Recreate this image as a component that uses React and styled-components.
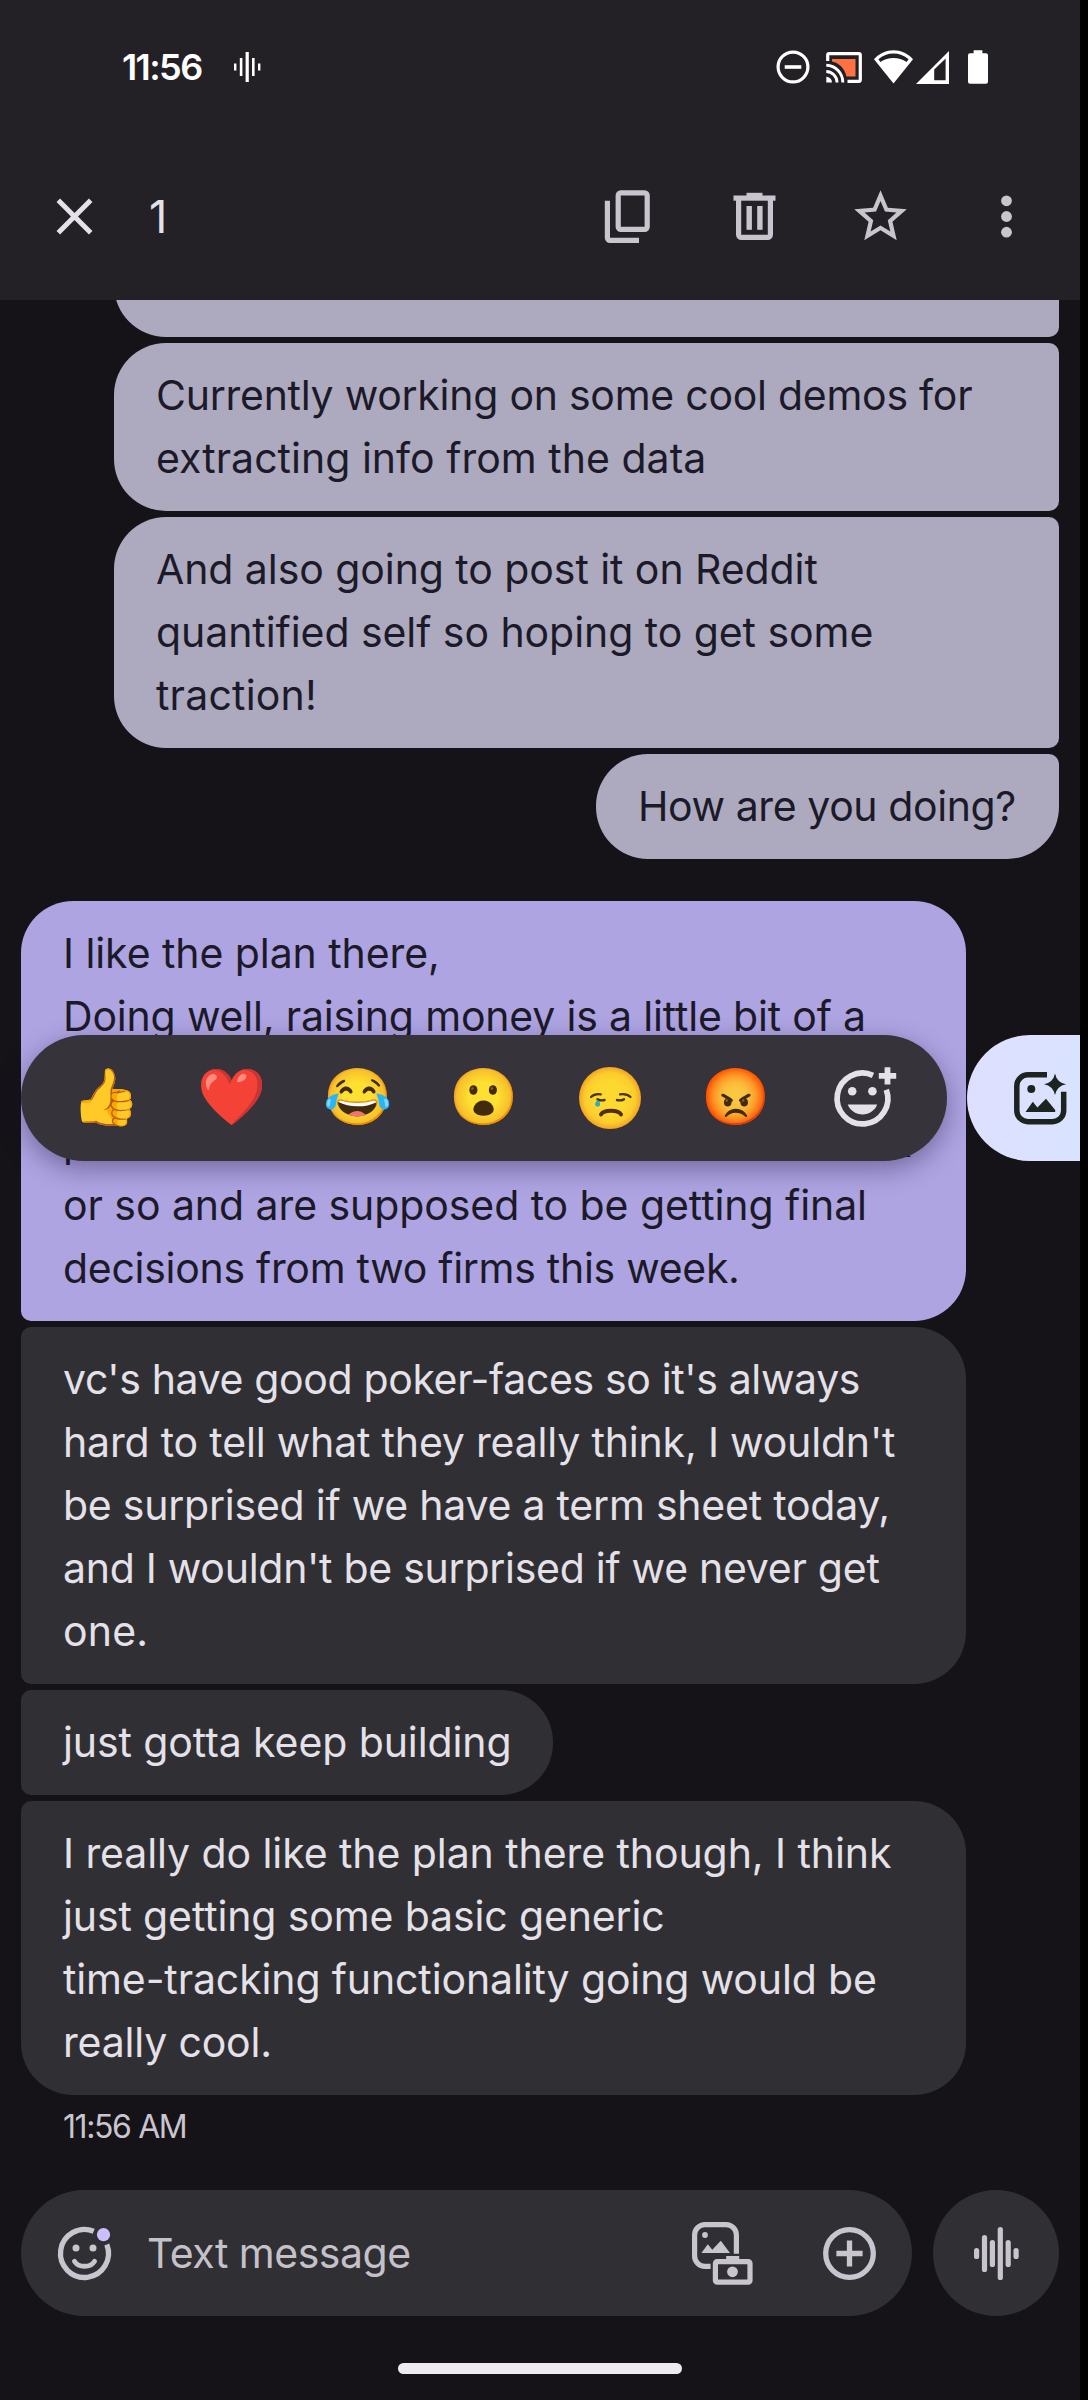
import React from 'react';
import styled, { createGlobalStyle } from 'styled-components';

const color = {
  screen: '#151318',
  header: '#232126',
  surface: '#302f34',
  popup: '#36333a',
  sent: '#adaabf',
  selected: '#aea4e2',
  onDark: '#e4e1e8',
  onLight: '#1c1a28',
  muted: '#c9c5ce',
};

const Global = createGlobalStyle`
  html, body { margin: 0; padding: 0; background: #000; }
  * { box-sizing: border-box; }
`;

const Screen = styled.div`
  width: 1080px;
  height: 2400px;
  overflow: hidden;
  display: flex;
  flex-direction: column;
  background: ${color.screen};
  font-family: Inter, Roboto, sans-serif;
  color: ${color.onDark};
`;

const Header = styled.header`
  flex: none;
  height: 300px;
  background: ${color.header};
`;

const StatusBar = styled.div`
  height: 134px;
  padding: 0 92px 0 122px;
  display: flex;
  align-items: center;
  color: #fff;
`;

const Clock = styled.span`
  width: 81px;
  font-size: 36px;
  font-weight: 600;
  line-height: 44px;
  letter-spacing: -1.6px;
  white-space: nowrap;
`;

const StatusIcons = styled.div`
  margin-left: auto;
  display: flex;
  align-items: center;
`;

const Icon = styled.svg`
  display: block;
  flex: none;
  overflow: visible;
  margin-left: ${(p) => p.$ml || 0}px;
`;

const Toolbar = styled.div`
  height: 166px;
  padding: 0 42px 1px 43px;
  display: flex;
  align-items: center;
`;

const Count = styled.span`
  margin-left: 43px;
  font-size: 45px;
  line-height: 63px;
`;

const Actions = styled.div`
  margin-left: auto;
  display: flex;
  gap: 63px;
  color: ${color.muted};
`;

const Messages = styled.main`
  flex: none;
  height: 1890px;
  padding: 0 21px;
  overflow: hidden;
  display: flex;
  flex-direction: column;
  gap: 6px;
`;

const variants = {
  sent: { bg: color.sent, fg: color.onLight, side: 'flex-end' },
  selected: { bg: color.selected, fg: color.onLight, side: 'flex-start' },
  received: { bg: color.surface, fg: color.onDark, side: 'flex-start' },
};

const Bubble = styled.div`
  position: relative;
  flex: none;
  align-self: ${(p) => variants[p.$kind].side};
  width: ${(p) => p.$width || 945}px;
  margin-top: ${(p) => p.$mt || 0}px;
  padding: 21px 0 21px 42px;
  border-radius: ${(p) => p.$corners.map((c) => (c ? '52px' : '10px')).join(' ')};
  background: ${(p) => variants[p.$kind].bg};
  color: ${(p) => variants[p.$kind].fg};
  font-size: 41px;
  line-height: 63px;
`;

const ClippedBubble = styled(Bubble)`
  height: 105px;
`;

const Line = styled.div`
  height: 63px;
  white-space: nowrap;
  letter-spacing: ${(p) => p.$track}px;
`;

const Timestamp = styled.time`
  margin: 2px 0 0 42px;
  font-size: 32px;
  line-height: 48px;
  letter-spacing: -1.4px;
  color: ${color.muted};
`;

const Popup = styled.div`
  position: absolute;
  z-index: 2;
  top: 134px;
  left: 0;
  display: flex;
  gap: 20px;
`;

const Reactions = styled.div`
  width: 926px;
  height: 126px;
  padding-left: 22px;
  border-radius: 63px;
  background: ${color.popup};
  box-shadow: 0 8px 26px rgba(20, 10, 50, 0.38);
  display: flex;
  align-items: center;
  color: ${color.onDark};
`;

const Reaction = styled.span`
  width: 126px;
  height: 126px;
  display: flex;
  align-items: center;
  justify-content: center;
  font-family: 'Noto Color Emoji', Inter, sans-serif;
  font-size: 55.5px;
  line-height: 66px;
`;

const Remix = styled.div`
  width: 200px;
  height: 126px;
  padding: 31px 0 0 42px;
  border-radius: 63px;
  background: linear-gradient(100deg, #dfdfff 0%, #d8e3ff 60%);
  color: #1d2420;
`;

const Composer = styled.footer`
  height: 126px;
  padding: 0 21px;
  display: flex;
  gap: 21px;
`;

const Field = styled.div`
  width: 891px;
  height: 126px;
  padding: 0 31px 0 32px;
  border-radius: 63px;
  background: ${color.surface};
  color: ${color.muted};
  display: flex;
  align-items: center;
`;

const Placeholder = styled.span`
  flex: 1;
  margin-left: 31px;
  font-size: 41px;
  line-height: 63px;
  letter-spacing: -0.5px;
  color: #c4c1c9;
`;

const FieldActions = styled.div`
  display: flex;
  gap: 63px;
`;

const VoiceButton = styled.div`
  width: 126px;
  height: 126px;
  border-radius: 50%;
  background: ${color.surface};
  color: ${color.muted};
  display: flex;
  align-items: center;
  justify-content: center;
`;

const Handle = styled.div`
  width: 284px;
  height: 11px;
  margin: 47px auto 0;
  border-radius: 6px;
  background: #ecebed;
`;

const Wave = () => (
  <Icon width="27" height="30" viewBox="0 0 27 30" fill="currentColor" $ml={31}>
    <rect x="0" y="11.5" width="2.4" height="7" />
    <rect x="5.8" y="6" width="2.6" height="18" />
    <rect x="11.6" y="0" width="3.2" height="30" />
    <rect x="18" y="6" width="2.6" height="18" />
    <rect x="24" y="11.5" width="2.4" height="7" />
  </Icon>
);

const Disturb = () => (
  <Icon width="34" height="34" viewBox="0 0 34 34" fill="none" stroke="currentColor" strokeWidth="3.2">
    <circle cx="17" cy="17" r="14.9" />
    <path d="M8.7 17H25.3" strokeWidth="3.6" />
  </Icon>
);

const Cast = () => (
  <Icon width="36" height="31" viewBox="0 0 36 31" $ml={16}>
    <path d="M6 7H29.5V24.4H20.5C18.5 16 13 11 6 9.5Z" fill="#ff7043" />
    <path d="M1.7 9V3.2A1.5 1.5 0 0 1 3.2 1.7H32.8A1.5 1.5 0 0 1 34.3 3.2V28A1.5 1.5 0 0 1 32.8 29.4H21.5" fill="none" stroke="#fff" strokeWidth="3.2" />
    <path d="M0.3 13.3A17 17 0 0 1 16.8 30.5M0.3 19.5A11 11 0 0 1 11 30.5" fill="none" stroke="#fff" strokeWidth="2.9" />
    <path d="M0.3 24.7A6 6 0 0 1 6 30.6H0.3Z" fill="#fff" />
  </Icon>
);

const Wifi = () => (
  <Icon width="39" height="34" viewBox="0 0 39 34" $ml={12}>
    <path d="M0 9.2C11 -2.6 28 -2.6 39 9.2L19.5 33.4Z" fill="#fff" />
    <path d="M4.4 9.2C13 1.6 26 1.6 34.6 9.2L32.6 12C25 6.6 14 6.6 6.4 12Z" fill={color.header} />
  </Icon>
);

const Signal = () => (
  <Icon width="33" height="33" viewBox="0 0 33 33" $ml={3}>
    <path d="M0 33L33 0V33Z" fill="#fff" />
    <path d="M18.2 29.2V18.4L29.6 7.6V29.2Z" fill={color.header} />
  </Icon>
);

const Battery = () => (
  <Icon width="20" height="34" viewBox="0 0 20 34" fill="#fff" $ml={19}>
    <path d="M5.6 3.3V0.2H14.4V3.3H18A2 2 0 0 1 20 5.3V31.8A2 2 0 0 1 18 33.8H2A2 2 0 0 1 0 31.8V5.3A2 2 0 0 1 2 3.3Z" />
  </Icon>
);

const Close = () => (
  <Icon width="63" height="63" viewBox="0 0 63 63" fill="none" stroke="currentColor" strokeWidth="5">
    <path d="M15.3 15.3L47.7 47.7M47.7 15.3L15.3 47.7" />
  </Icon>
);

const Copy = () => (
  <Icon width="63" height="63" viewBox="0 0 63 63" fill="none" stroke="currentColor" strokeWidth="5.2">
    <rect x="21.2" y="7.8" width="29" height="36.6" rx="2.6" />
    <path d="M10.4 15.8V52.8A2.6 2.6 0 0 0 13 55.4H42" />
  </Icon>
);

const Trash = () => (
  <Icon width="63" height="63" viewBox="0 0 63 63" fill="currentColor">
    <path d="M15.6 14V49.6A2.8 2.8 0 0 0 18.4 52.4H44.6A2.8 2.8 0 0 0 47.4 49.6V14" fill="none" stroke="currentColor" strokeWidth="5.2" />
    <rect x="10.5" y="10.5" width="42" height="5.2" />
    <rect x="23.5" y="7.8" width="16" height="5" />
    <rect x="23.5" y="21" width="5.4" height="23.8" />
    <rect x="34.2" y="21" width="5.4" height="23.8" />
  </Icon>
);

const Star = () => (
  <Icon width="63" height="63" viewBox="0 0 24 24" fill="currentColor">
    <path d="M22 9.24l-7.19-.62L12 2 9.19 8.63 2 9.24l5.46 4.73L5.82 21 12 17.27 18.18 21l-1.63-7.03L22 9.24zM12 15.4l-3.76 2.27 1-4.28-3.32-2.88 4.38-.38L12 6.1l1.71 4.04 4.38.38-3.32 2.88 1 4.28L12 15.4z" />
  </Icon>
);

const More = () => (
  <Icon width="63" height="63" viewBox="0 0 63 63" fill="currentColor">
    <circle cx="31.5" cy="15.8" r="5.4" />
    <circle cx="31.5" cy="31.5" r="5.4" />
    <circle cx="31.5" cy="47.2" r="5.4" />
  </Icon>
);

const SadFace = () => (
  <Icon width="62" height="62" viewBox="0 0 62 62" fill="none" strokeLinecap="round">
    <defs>
      <radialGradient id="face" cx="50%" cy="50%" r="50%">
        <stop offset="0.5" stopColor="#fdd930" />
        <stop offset="0.82" stopColor="#fbcc2c" />
        <stop offset="1" stopColor="#f4a223" />
      </radialGradient>
    </defs>
    <circle cx="31" cy="31" r="31" fill="url(#face)" />
    <path d="M12 30Q16 26.2 21.8 27.4M41 27.4Q47.5 26.2 51.5 30" stroke="#4c3208" strokeWidth="2.2" />
    <path d="M18.5 32.3Q22 34 25.5 33M38 33Q41.5 34 45 32.3" stroke="#4c3208" strokeWidth="2.4" />
    <path d="M18.6 32.6C20.5 35 21.6 36.6 21 38.2C20.2 40 17 40 16.3 38.2C15.7 36.6 17 35 18.6 32.6Z" fill="#2fa9c4" />
    <path d="M22 47.4C24.5 42.6 39.5 42.6 42 47.4" stroke="#4f2f00" strokeWidth="4" />
  </Icon>
);

const AddReaction = () => (
  <Icon width="63" height="63" viewBox="0 0 63 63" fill="currentColor">
    <path d="M42 8.4A25.4 25.4 0 1 0 55.3 22.7" fill="none" stroke="currentColor" strokeWidth="5.7" />
    <circle cx="21.2" cy="24.3" r="4.3" />
    <circle cx="41.4" cy="24.3" r="4.3" />
    <path d="M16.7 37.5H46.2C43.8 43.6 38 47.5 31.5 47.5C25 47.5 19.1 43.6 16.7 37.5Z" />
    <path d="M53.6 0.2H59.4V6H65.2V11.8H59.4V17.6H53.6V11.8H47.8V6H53.6Z" />
  </Icon>
);

const ImageSparkle = () => (
  <Icon width="63" height="63" viewBox="0 0 63 63" fill="currentColor">
    <path d="M38 8.8H19A11.2 11.2 0 0 0 7.8 20V44.5A11.2 11.2 0 0 0 19 55.7H43.5A11.2 11.2 0 0 0 54.7 44.5V25.7" fill="none" stroke="currentColor" strokeWidth="5.5" />
    <path d="M46 7.5Q47.8 16.5 57 18.3Q47.8 20.1 46 29.1Q44.2 20.1 35 18.3Q44.2 16.5 46 7.5Z" />
    <circle cx="22.3" cy="23" r="4" />
    <path d="M16.5 46L23.8 35.7L28.4 41.5L37 32.7L46.2 44V46Z" />
  </Icon>
);

const Smile = () => (
  <Icon width="63" height="63" viewBox="0 0 63 63" fill="currentColor">
    <path d="M40.7 9.3A24 24 0 1 0 53.8 22.6" fill="none" stroke="currentColor" strokeWidth="5.3" />
    <circle cx="23" cy="26" r="3.5" />
    <circle cx="40" cy="26" r="3.5" />
    <path d="M21.4 39.2C25.5 45.9 37.5 45.9 41.6 39.2" fill="none" stroke="currentColor" strokeWidth="4.8" strokeLinecap="round" />
    <circle cx="50.5" cy="12.7" r="6.6" fill="#cbbfff" />
  </Icon>
);

const GalleryCamera = () => (
  <Icon width="63" height="63" viewBox="0 0 63 63" fill="currentColor">
    <path d="M44.4 31.7V13A10.4 10.4 0 0 0 34 2.6H13A10.4 10.4 0 0 0 2.6 13V34A10.4 10.4 0 0 0 13 44.4H18.6" fill="none" stroke="currentColor" strokeWidth="5.2" />
    <circle cx="13" cy="13" r="2.9" />
    <path d="M9.4 31L15.8 22.2L20.3 27.8L28.8 18.8L38 31Z" />
    <rect x="23.4" y="39.6" width="34.6" height="20.6" rx="1.8" fill="none" stroke="currentColor" strokeWidth="5.2" />
    <rect x="34.2" y="34" width="13" height="5" />
    <circle cx="40.5" cy="49.8" r="5.4" />
  </Icon>
);

const PlusCircle = () => (
  <Icon width="63" height="63" viewBox="0 0 63 63" fill="none" stroke="currentColor" strokeWidth="5.3">
    <circle cx="31.5" cy="31.5" r="23.8" />
    <path d="M31.5 18.4V44.6M18.4 31.5H44.6" />
  </Icon>
);

const bars = [11, 37, 27, 53, 27, 11];
const Voice = () => (
  <Icon width="45" height="53" viewBox="0 0 45 53" fill="currentColor">
    {bars.map((h, i) => (
      <rect key={i} x={i * 7.9} y={(53 - h) / 2} width="5.2" height={h} rx="2.6" />
    ))}
  </Icon>
);

const Text = ({ lines }) =>
  lines.map(([text, track]) => (
    <Line key={text} $track={track}>
      {text}
    </Line>
  ));

const currently = [
  ['Currently working on some cool demos for', -0.26],
  ['extracting info from the data', 0.02],
];
const reddit = [
  ['And also going to post it on Reddit', -0.07],
  ['quantified self so hoping to get some', -0.06],
  ['traction!', 0.2],
];
const plan = [
  ['I like the plan there,', -0.07],
  ['Doing well, raising money is a little bit of a', -0.18],
  ['grind but we are moving along. We have', 0],
  ['pitched around ten investors in the last week', -0.39],
  ['or so and are supposed to be getting final', -0.07],
  ['decisions from two firms this week.', -0.29],
];
const poker = [
  ["vc's have good poker-faces so it's always", -0.36],
  ["hard to tell what they really think, I wouldn't", -0.18],
  ['be surprised if we have a term sheet today,', -0.23],
  ["and I wouldn't be surprised if we never get", -0.27],
  ['one.', 0.2],
];
const tracking = [
  ['I really do like the plan there though, I think', -0.08],
  ['just getting some basic generic', -0.13],
  ['time-tracking functionality going would be', -0.13],
  ['really cool.', -0.18],
];

export default function App() {
  return (
    <>
      <Global />
      <Screen>
        <Header>
          <StatusBar>
            <Clock>11:56</Clock>
            <Wave />
            <StatusIcons>
              <Disturb />
              <Cast />
              <Wifi />
              <Signal />
              <Battery />
            </StatusIcons>
          </StatusBar>
          <Toolbar>
            <Close />
            <Count>1</Count>
            <Actions>
              <Copy />
              <Trash />
              <Star />
              <More />
            </Actions>
          </Toolbar>
        </Header>
        <Messages>
          <ClippedBubble $kind="sent" $corners={[1, 0, 0, 1]} $mt={-68} />
          <Bubble $kind="sent" $corners={[1, 0, 0, 1]}>
            <Text lines={currently} />
          </Bubble>
          <Bubble $kind="sent" $corners={[1, 0, 0, 1]}>
            <Text lines={reddit} />
          </Bubble>
          <Bubble $kind="sent" $corners={[1, 0, 1, 1]} $width={463}>
            <Text lines={[['How are you doing?', -0.41]]} />
          </Bubble>
          <Bubble $kind="selected" $corners={[1, 1, 1, 0]} $mt={36}>
            <Text lines={plan} />
            <Popup>
              <Reactions>
                <Reaction>👍</Reaction>
                <Reaction>❤️</Reaction>
                <Reaction>😂</Reaction>
                <Reaction>😮</Reaction>
                <Reaction>
                  <SadFace />
                </Reaction>
                <Reaction>😡</Reaction>
                <Reaction>
                  <AddReaction />
                </Reaction>
              </Reactions>
              <Remix>
                <ImageSparkle />
              </Remix>
            </Popup>
          </Bubble>
          <Bubble $kind="received" $corners={[0, 1, 1, 0]}>
            <Text lines={poker} />
          </Bubble>
          <Bubble $kind="received" $corners={[0, 1, 1, 0]} $width={532}>
            <Text lines={[['just gotta keep building', -0.09]]} />
          </Bubble>
          <Bubble $kind="received" $corners={[0, 1, 1, 1]}>
            <Text lines={tracking} />
          </Bubble>
          <Timestamp>11:56 AM</Timestamp>
        </Messages>
        <Composer>
          <Field>
            <Smile />
            <Placeholder>Text message</Placeholder>
            <FieldActions>
              <GalleryCamera />
              <PlusCircle />
            </FieldActions>
          </Field>
          <VoiceButton>
            <Voice />
          </VoiceButton>
        </Composer>
        <Handle />
      </Screen>
    </>
  );
}
